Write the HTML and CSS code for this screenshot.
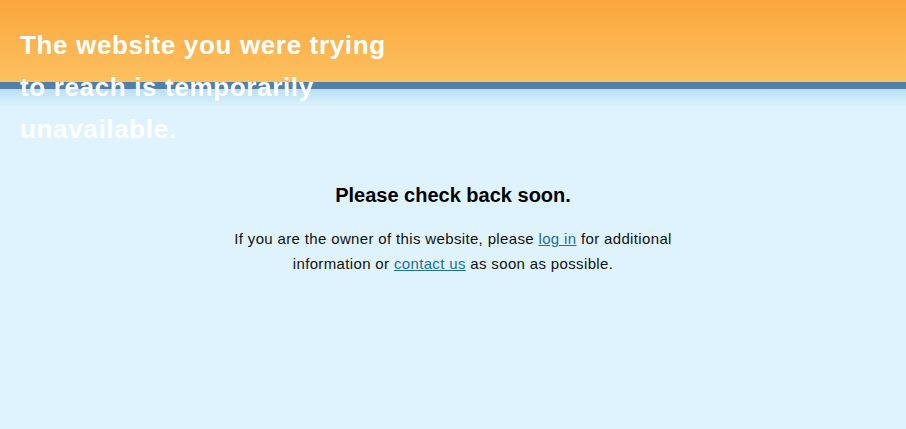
FILE: index.html
```html
<!DOCTYPE html>
<html>
<head>
<meta charset="utf-8">
<link rel="stylesheet" href="styles.css">
</head>
<body>
<div class="bg">
  <div class="top"></div>
  <div class="band"></div>
  <div class="fade"></div>
</div>
<div class="page">
  <h1 class="title">The website you were trying to reach is temporarily unavailable.</h1>
  <div class="content">
    <h2 class="sub">Please check back soon.</h2>
    <p class="msg">If you are the owner of this website, please <a href="#">log in</a> for additional information or <a href="#">contact us</a> as soon as possible.</p>
  </div>
</div>
</body>
</html>
```
FILE: styles.css
```css
html, body {
  margin: 0;
  padding: 0;
}
body {
  background: #dff3fe;
  font-family: "Liberation Sans", Arial, sans-serif;
  position: relative;
  min-height: 429px;
}
.bg {
  position: absolute;
  left: 0;
  top: 0;
  right: 0;
  z-index: 0;
}
.top {
  height: 82px;
  background: linear-gradient(#fba63c, #fcc160);
}
.band {
  height: 7px;
  background: #517fa8;
}
.fade {
  height: 18px;
  background: linear-gradient(#b8dff2, #dff3fe);
}
.page {
  position: relative;
  z-index: 1;
  padding: 24px 20px 0;
}
.title {
  margin: 0;
  width: 380px;
  color: #fff;
  font-size: 26px;
  line-height: 42px;
  font-weight: bold;
  letter-spacing: 0.65px;
}
.content {
  text-align: center;
  margin-top: 33px;
}
.sub {
  margin: 0;
  font-size: 20px;
  line-height: 24px;
  color: #000;
}
.msg {
  margin: 19px auto 0;
  width: 470px;
  font-size: 15px;
  line-height: 25px;
  color: #111;
  letter-spacing: 0.35px;
}
.msg a {
  color: #1d6f99;
}
```
